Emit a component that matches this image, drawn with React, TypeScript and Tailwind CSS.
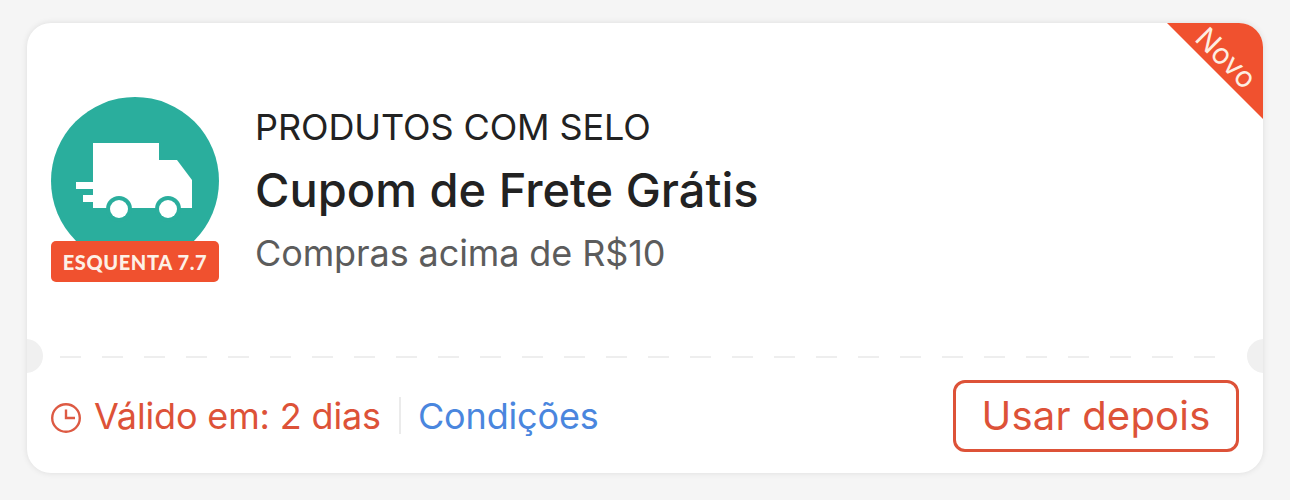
export default function App() {
  return (
    <div className="h-[500px] w-[1290px] overflow-hidden bg-[#f5f5f5] pl-[27px] pt-[23px] font-['Inter',sans-serif]">
      <div className="relative flex h-[450px] w-[1236px] flex-col overflow-hidden rounded-[24px] bg-white shadow-[0_0_6px_rgba(0,0,0,0.1)]">
        <div className="flex h-[333px] items-start pl-[24px] pt-[74px]">
          <div className="relative h-[185px] w-[168px] shrink-0">
            <svg width="168" height="168" viewBox="0 0 168 168">
              <circle cx="84" cy="84" r="84" fill="#2aae9d" />
              <path d="M42 46H108V63H126L141 83V111H42V105H32V98H42V92H25V85H42Z" fill="#fff" />
              <circle cx="68" cy="112" r="13" fill="#2aae9d" />
              <circle cx="117" cy="112" r="13" fill="#2aae9d" />
              <circle cx="68" cy="112" r="9" fill="#fff" />
              <circle cx="117" cy="112" r="9" fill="#fff" />
            </svg>
            <div className="absolute bottom-0 left-0 flex h-[41px] w-[168px] items-center justify-center rounded-[5px] bg-[#f0512f] font-['Lato',sans-serif] text-[20px] font-black tracking-[0.6px] text-[#fdf0e6]">
              ESQUENTA 7.7
            </div>
          </div>
          <div className="ml-[36px] flex flex-col">
            <div className="text-[36px] leading-[60px] tracking-[-0.1px] text-[#222]">PRODUTOS COM SELO</div>
            <div className="text-[47px] font-medium leading-[66px] text-[#222]">Cupom de Frete Grátis</div>
            <div className="text-[36px] leading-[60px] tracking-[-0.1px] text-[#5c5c5c]">Compras acima de R$10</div>
          </div>
        </div>
        <div className="ml-[33px] h-[2px] w-[1156px] bg-[repeating-linear-gradient(90deg,#eeeeee_0,#eeeeee_21px,transparent_21px,transparent_42px)]" />
        <div className="flex flex-1 items-center justify-between pl-[24px] pr-[24px]">
          <div className="flex items-center">
            <svg className="mt-[4px]" width="30" height="30" viewBox="0 0 30 30" fill="none" stroke="#dd5a43" strokeWidth="2.4">
              <circle cx="15" cy="15" r="13.8" />
              <path d="M15 6.5V15H24" />
            </svg>
            <span className="ml-[13px] text-[36px] tracking-[-0.15px] text-[#dd5238]">Válido em: 2 dias</span>
            <div className="ml-[18px] mr-[17px] h-[37px] w-[2px] bg-[#ebebeb]" />
            <span className="text-[36px] tracking-[-0.15px] text-[#4a86de]">Condições</span>
          </div>
          <button className="h-[72px] w-[286px] rounded-[12px] border-[3px] border-[#dd5238] text-[40px] tracking-[0.2px] text-[#dd5238]">
            Usar depois
          </button>
        </div>
        <div className="absolute left-[-18px] top-[316px] h-[34px] w-[34px] rounded-full bg-[#f0f0f0]" />
        <div className="absolute right-[-18px] top-[316px] h-[34px] w-[34px] rounded-full bg-[#f0f0f0]" />
        <div className="absolute right-0 top-0 h-[96px] w-[96px] bg-[#f0512f] [clip-path:polygon(0_0,100%_0,100%_100%)]" />
        <div className="absolute right-[-1px] top-[25px] w-[76px] rotate-45 whitespace-nowrap text-center text-[29px] leading-[20px] text-[#fdeee2]">
          Novo
        </div>
      </div>
    </div>
  );
}
